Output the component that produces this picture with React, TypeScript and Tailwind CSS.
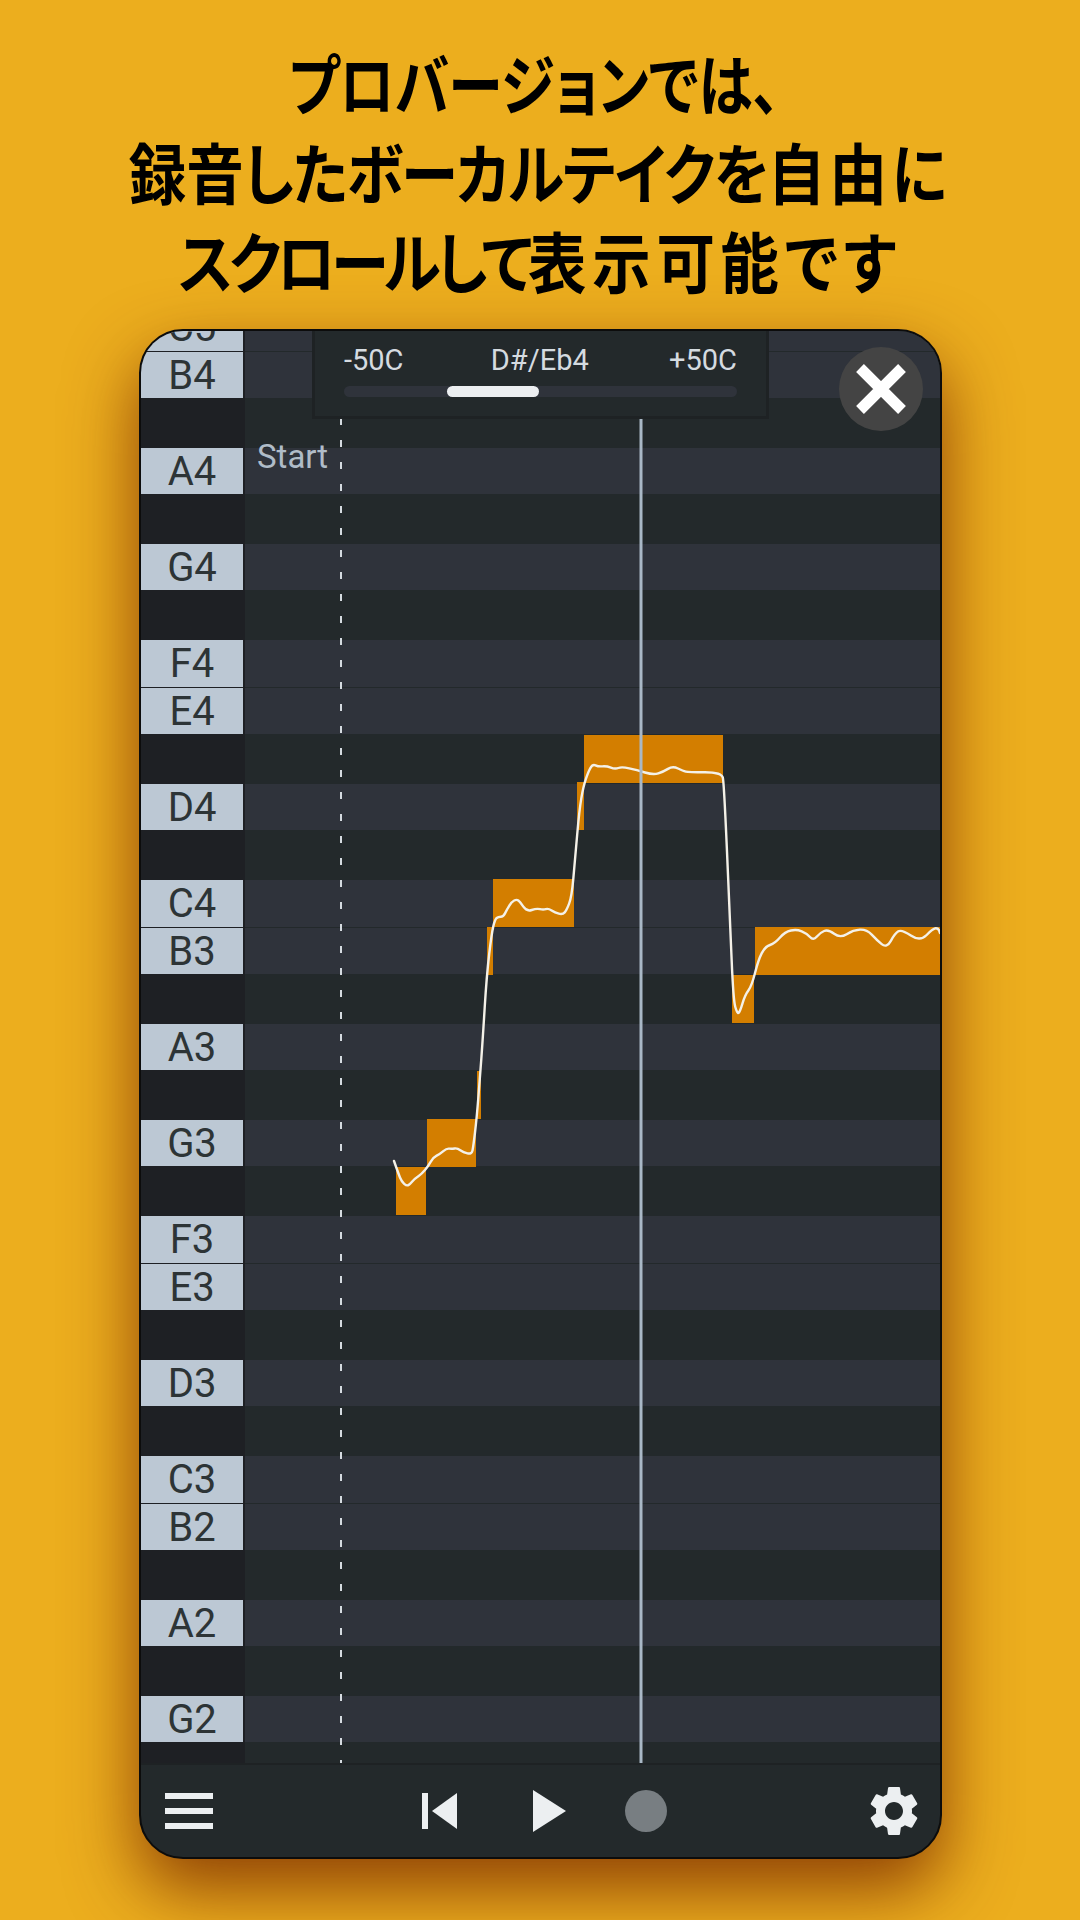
import React from "react";

const NAMES = ["C", "B", "A#", "A", "G#", "G", "F#", "F", "E", "D#", "D", "C#"];
const rows = Array.from({ length: 31 }, (_, i) => {
  const n = NAMES[i % 12];
  const octave = 5 - Math.ceil(i / 12);
  return { id: i, name: n, white: !n.includes("#"), label: `${n}${octave}`, tall: n === "C" || n === "F" };
});

const blocks = [
  [396, 1167, 30, 48],
  [427, 1119, 49, 48],
  [477, 1071, 4, 48],
  [487, 927, 6, 48],
  [493, 879, 81, 48],
  [577, 782, 7, 48],
  [584, 735, 139, 48],
  [732, 975, 22, 48],
  [755, 927, 185, 48],
];

const pts: number[][] = [
  [394, 1161], [398.3, 1173.3], [401.7, 1181.7], [406.7, 1186], [410, 1184.3], [415, 1178.3], [421.7, 1174], [428.3, 1166],
  [433.3, 1157.3], [440, 1154], [446.7, 1148.3], [451.7, 1149], [457.3, 1148], [463.3, 1152.3], [471.7, 1154.3], [473.3, 1146.7],
  [476.7, 1118.3], [480, 1076.7], [482.7, 1040], [486.7, 975], [491.7, 933], [495, 919.3], [498.3, 916.7], [503.3, 916.7],
  [506.7, 910], [511.7, 901.7], [516.7, 899.3], [520, 901.7], [526.7, 911.7], [536.7, 908.3], [543.3, 910], [548.3, 908.3],
  [555, 912.7], [562.7, 914.7], [566.7, 910], [571.7, 896.7], [575, 860], [579.3, 810], [583.3, 786.7], [588.3, 771.7],
  [592.7, 764], [598.3, 766.7], [606.7, 766], [615, 769.3], [621.7, 766.7], [636.7, 770], [653.3, 775], [663.3, 771.7],
  [672.7, 766], [683.3, 771], [688.3, 772.3], [721.7, 772.3], [724, 783.3], [730, 920], [733.3, 1000], [737.3, 1014],
  [740, 1011.7], [745, 995], [751.7, 986], [758.3, 960], [765, 946.7], [775, 943.3], [785, 931.7], [796.7, 929.3],
  [806.7, 933.3], [813.3, 940.7], [820, 932.7], [828.3, 929.3], [840, 938.3], [853.3, 930], [866.7, 929.3], [876.7, 940],
  [886.7, 948.3], [895, 933.3], [901.7, 929.3], [920, 941.7], [933.3, 928.3], [938.3, 928.3], [940, 933],
];

const curve = pts.reduce((d, p, i) => {
  if (i === 0) return `M${p[0]} ${p[1]}`;
  if (i === pts.length - 1) return `${d} L${p[0]} ${p[1]}`;
  const next = pts[i + 1];
  return `${d} Q${p[0]} ${p[1]} ${(p[0] + next[0]) / 2} ${(p[1] + next[1]) / 2}`;
}, "");

function Row({ r }: { r: (typeof rows)[number] }) {
  return (
    <div className="flex h-[48px] shrink-0">
      <div className="w-[104px] shrink-0 bg-[#1e2024]">
        {r.white && (
          <div className={`flex w-[102px] items-center justify-center bg-[#bcc8d4] pt-[1px] text-[40px] text-[#2d3436] ${r.tall ? "h-[47px]" : "h-[46px]"}`}>
            {r.label}
          </div>
        )}
      </div>
      <div className="flex-1 bg-[#23292b]">
        {r.white && <div className={`bg-[#2f333b] ${r.tall ? "h-[47px]" : "h-[46px]"}`} />}
      </div>
    </div>
  );
}

export default function App() {
  return (
    <div className="h-[1920px] w-[1080px] overflow-hidden bg-[#ecae1e] font-['Roboto',sans-serif]">
      <div className="pt-[37px] text-center font-['Noto_Sans_CJK_JP',sans-serif] text-[66px] leading-[89px] font-bold text-black [font-feature-settings:'palt']">
        <div className="scale-x-[0.83] pr-[14px]">プロバージョンでは、</div>
        <div className="scale-x-[0.87]">
          録音<span className="tracking-[-1.4px]">したボーカルテイクを</span>
          <span className="tracking-[5px]">自由に</span>
        </div>
        <div className="scale-x-[0.885]">
          <span className="tracking-[-5px]">スクロールして</span>
          <span className="tracking-[6.5px]">表示可能です</span>
        </div>
      </div>

      <div className="mt-[25px] ml-[139px] flex h-[1530px] w-[803px] flex-col overflow-hidden rounded-[44px] border-2 border-[#0c0c0c] bg-[#23292b] shadow-[0_30px_70px_rgba(125,45,0,0.85)]">
        <div className="relative h-[1432px] shrink-0 overflow-hidden">
          <div className="-mt-[27px] flex flex-col">
            {rows.map((r) => (
              <Row key={r.id} r={r} />
            ))}
          </div>

          {blocks.map(([x, y, w, h]) => (
            <div
              key={`${x}-${y}`}
              className="absolute bg-[#d37e00]"
              style={{ left: x - 141, top: y - 331, width: w, height: h }}
            />
          ))}

          <svg className="absolute inset-0 h-[1432px] w-[799px]" viewBox="141 331 799 1432" fill="none">
            <line x1="341" y1="418" x2="341" y2="1763" stroke="#d5dbe0" strokeWidth="2" strokeDasharray="7 15" />
            <path d={curve} stroke="#f4f1e8" strokeWidth="2.4" strokeLinejoin="round" strokeLinecap="round" />
            <line x1="641" y1="417" x2="641" y2="1763" stroke="#a9b8c6" strokeWidth="3" />
          </svg>

          <div className="absolute top-[108px] left-[116px] text-[33px] leading-[36px] text-[#b0bcc8]">Start</div>

          <div className="absolute top-0 left-[171px] h-[88px] w-[457px] border-[3px] border-t-0 border-[#1e2224] bg-[#23292b] px-[29px] pt-[11px] text-[#d5dbe0]">
            <div className="flex items-center justify-between text-[29px] leading-[36px]">
              <span>-50C</span>
              <span className="ml-[7px]">D#/Eb4</span>
              <span>+50C</span>
            </div>
            <div className="mt-[8px] h-[11px] rounded-full bg-[#2f333b]">
              <div className="ml-[103px] h-[11px] w-[92px] rounded-full bg-[#eceff1]" />
            </div>
          </div>

          <div className="absolute top-[16px] left-[698px] flex h-[84px] w-[84px] items-center justify-center rounded-full bg-[#444444]">
            <svg width="50" height="50" viewBox="0 0 50 50">
              <path d="M4 4 46 46M46 4 4 46" stroke="#ffffff" strokeWidth="11" />
            </svg>
          </div>
        </div>

        <div className="flex flex-1 items-center justify-between border-t-2 border-[#1e2224] pr-[16px] pl-[24px]">
          <div className="flex w-[48px] flex-col gap-[9px]">
            <div className="h-[6px] bg-[#eceff1]" />
            <div className="h-[6px] bg-[#eceff1]" />
            <div className="h-[6px] bg-[#eceff1]" />
          </div>
          <div className="ml-[11px] flex items-center">
            <svg width="36" height="38" viewBox="0 0 36 38" fill="#eceff1">
              <rect x="0" y="1" width="6" height="36" />
              <path d="M10 19 35 1v36z" />
            </svg>
            <svg className="ml-[75px]" width="34" height="42" viewBox="0 0 34 42" fill="#eceff1">
              <path d="M0 0 33 21 0 42z" />
            </svg>
            <div className="ml-[58px] h-[42px] w-[42px] rounded-full bg-[#787e82]" />
          </div>
          <svg width="60" height="60" viewBox="0 0 24 24" fill="#eceff1">
            <path d="M19.14 12.94c.04-.3.06-.61.06-.94 0-.32-.02-.64-.07-.94l2.03-1.58c.18-.14.23-.41.12-.61l-1.92-3.32c-.12-.22-.37-.29-.59-.22l-2.39.96c-.5-.38-1.03-.7-1.62-.94l-.36-2.54c-.04-.24-.24-.41-.48-.41h-3.84c-.24 0-.43.17-.47.41l-.36 2.54c-.59.24-1.13.57-1.62.94l-2.39-.96c-.22-.08-.47 0-.59.22L2.74 8.87c-.12.21-.08.47.12.61l2.03 1.58c-.05.3-.09.63-.09.94s.02.64.07.94l-2.03 1.58c-.18.14-.23.41-.12.61l1.92 3.32c.12.22.37.29.59.22l2.39-.96c.5.38 1.03.7 1.62.94l.36 2.54c.05.24.24.41.48.41h3.84c.24 0 .44-.17.47-.41l.36-2.54c.59-.24 1.13-.56 1.62-.94l2.39.96c.22.08.47 0 .59-.22l1.92-3.32c.12-.22.07-.47-.12-.61l-2.01-1.58zM12 15.6c-1.98 0-3.6-1.62-3.6-3.6s1.62-3.6 3.6-3.6 3.6 1.62 3.6 3.6-1.62 3.6-3.6 3.6z" />
          </svg>
        </div>
      </div>
    </div>
  );
}
